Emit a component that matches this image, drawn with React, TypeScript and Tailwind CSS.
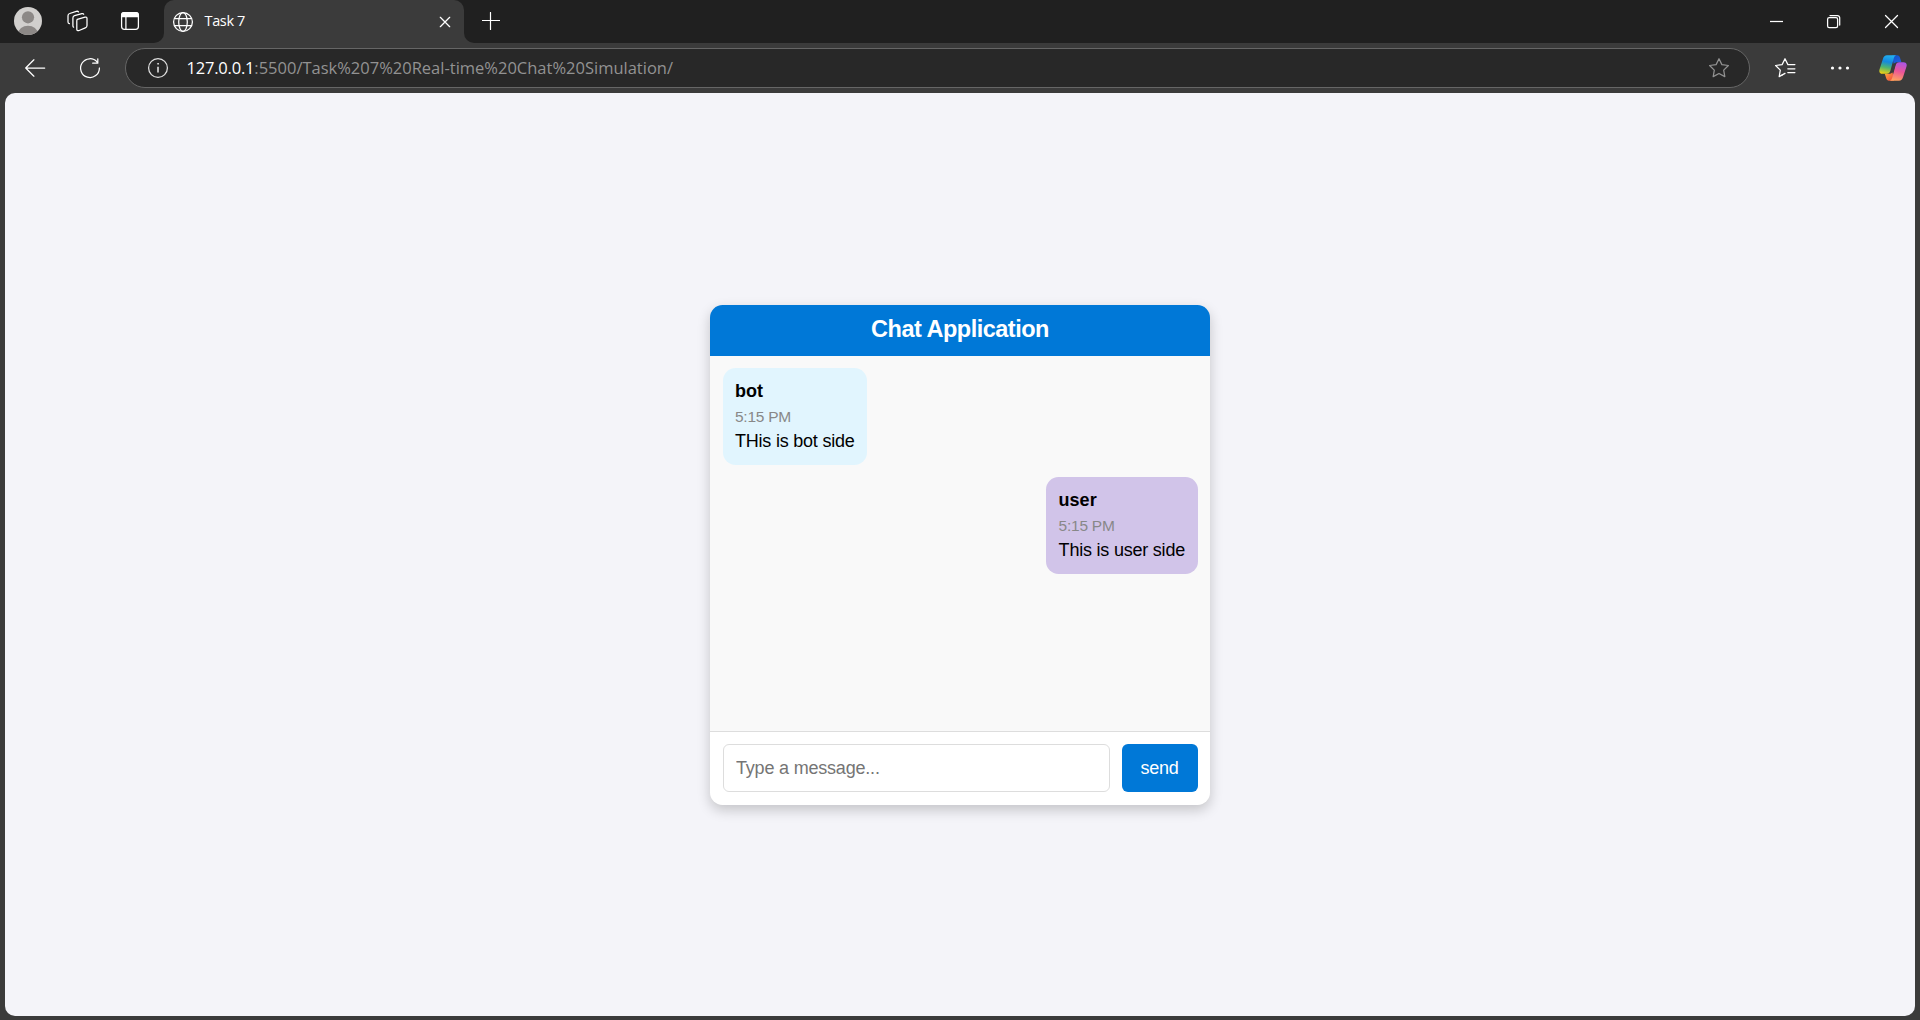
import type { ReactNode } from 'react';

function Icon({ size = 24, className = '', children }: { size?: number; className?: string; children: ReactNode }) {
  return (
    <svg
      width={size}
      height={size}
      viewBox={`0 0 ${size} ${size}`}
      fill="none"
      stroke="currentColor"
      strokeWidth="1.25"
      strokeLinecap="round"
      strokeLinejoin="round"
      className={`block shrink-0 ${className}`}
    >
      {children}
    </svg>
  );
}

function Avatar() {
  return (
    <svg width="28" height="28" viewBox="0 0 28 28" className="block shrink-0">
      <defs>
        <clipPath id="avatar-clip">
          <circle cx="14" cy="14" r="14" />
        </clipPath>
      </defs>
      <g clipPath="url(#avatar-clip)">
        <rect width="28" height="28" fill="#d1cfcd" />
        <circle cx="14" cy="10.3" r="6.1" fill="#8c8886" />
        <ellipse cx="14" cy="26.5" rx="9.8" ry="7.8" fill="#8c8886" />
      </g>
    </svg>
  );
}

function CopilotLogo() {
  return (
    <svg width="28" height="26" viewBox="0 0 28 26" className="block shrink-0">
      <defs>
        <linearGradient id="cp-left" x1="9" y1="0" x2="5" y2="19" gradientUnits="userSpaceOnUse">
          <stop offset="0" stopColor="#22b0ee" />
          <stop offset="0.35" stopColor="#1488e0" />
          <stop offset="0.65" stopColor="#4fb56f" />
          <stop offset="1" stopColor="#f6d010" />
        </linearGradient>
        <linearGradient id="cp-right" x1="23" y1="7" x2="18" y2="26" gradientUnits="userSpaceOnUse">
          <stop offset="0" stopColor="#a855e8" />
          <stop offset="0.5" stopColor="#ec5598" />
          <stop offset="1" stopColor="#ffa35e" />
        </linearGradient>
        <linearGradient id="cp-top" x1="14" y1="0" x2="20" y2="8" gradientUnits="userSpaceOnUse">
          <stop offset="0" stopColor="#1250c4" />
          <stop offset="1" stopColor="#2060e0" />
        </linearGradient>
        <linearGradient id="cp-bottom" x1="7" y1="19" x2="13" y2="25" gradientUnits="userSpaceOnUse">
          <stop offset="0" stopColor="#ff9a3c" />
          <stop offset="1" stopColor="#f0523f" />
        </linearGradient>
      </defs>
      <path d="M13 .3h5.200c1.500 0 2.300 1 2.800 2.500l1.400 4.400h-3.500c-2-.1-3.300.4-4.200 1.800z" fill="url(#cp-top)" />
      <path d="M15 25.700H10c-1.500 0-2.300-1-2.800-2.500L5.800 18.800h3.500c2 .1 3.300-.4 4.200-1.800z" fill="url(#cp-bottom)" />
      <path d="M8 .3h9.200c-1.300.4-1.900 1.500-2.400 3L11.400 15.800c-.6 2-1.800 3-3.700 3H3.500c-2.600 0-3.700-1.700-3-4.300L3.900 4C4.600 1.600 5.900.3 8 .3z" fill="url(#cp-left)" />
      <path d="M20 25.700h-9.200c1.300-.4 1.900-1.500 2.400-3l3.400-12.500c.6-2 1.800-3 3.700-3h4.200c2.600 0 3.700 1.700 3 4.300L24.100 22c-.7 2.400-2 3.700-4.100 3.700z" fill="url(#cp-right)" />
      <path d="M14.300 8.700h2.500l-2.700 8.700h-2.600z" fill="#3b3b3b" />
    </svg>
  );
}

function TabStrip() {
  return (
    <div className="flex h-[43px] shrink-0 bg-[#3b3b3b] text-white">
      <div className="flex w-[164px] items-start rounded-br-[10px] bg-[#202020] pl-3.5 pt-[7px]">
        <Avatar />
        <Icon className="ml-6 mt-0.5">
          <path d="M11.300 10.300l7.700-2.200c1.200-.3 2 .2 2 1.400v7c0 1.200-.6 2-1.700 2.400l-6.200 2.600c-1.300.5-2.300 0-2.300-1.300v-8c0-1 .2-1.600.5-1.900z" />
          <path d="M7.600 18.200c-.5-.3-.7-.8-.7-1.500V9c0-1.200.6-2 1.700-2.300l7.300-2c.8-.2 1.500 0 1.800.6" />
          <path d="M3.400 14.600c-.9-.2-1.400-.7-1.400-1.600V6.700c0-1.100.6-1.900 1.700-2.200l6.600-2.100c1-.3 1.800-.1 2.200.5" />
        </Icon>
        <Icon className="ml-7 mt-0.5">
          <rect x="3.600" y="3.600" width="16.800" height="16.800" rx="2.800" />
          <path d="M3.600 7.700h16.800V6.400a2.800 2.800 0 0 0-2.800-2.800H6.400a2.800 2.800 0 0 0-2.800 2.800z" fill="currentColor" />
          <path d="M7.900 8v12.400" />
        </Icon>
      </div>
      <div className="w-[300px] bg-[#202020]">
        <div className="flex h-full items-start rounded-t-[10px] bg-[#3b3b3b] pl-[7px] pt-[10px]">
          <Icon>
            <circle cx="12" cy="12" r="9.400" />
            <ellipse cx="12" cy="12" rx="4.300" ry="9.400" />
            <path d="M3.500 8.500h17M3.500 15.500h17" />
          </Icon>
          <span className="ml-[9.500px] flex-1 font-['Open_Sans',sans-serif] text-[14.500px] leading-[22px] tracking-[-0.35px]">Task 7</span>
          <Icon size={12} className="mr-[13px] mt-[6px]">
            <path d="M1.300 1.300l9.400 9.400M10.700 1.300L1.300 10.700" />
          </Icon>
        </div>
      </div>
      <div className="flex flex-1 items-start rounded-bl-[10px] bg-[#202020] pl-[18px] pr-[21px] pt-3">
        <Icon size={18}>
          <path d="M8.500 .5v17M0.500 8.500h17" strokeWidth="1.200" />
        </Icon>
        <div className="ml-auto flex gap-[43px] pt-[2px]">
          <Icon size={15}>
            <path d="M2 7.500h13" strokeLinecap="butt" />
          </Icon>
          <Icon size={15}>
            <rect x="1.600" y="3.600" width="10" height="10" rx="1.600" />
            <path d="M4 1.500h7.500a2.200 2.200 0 0 1 2.200 2.200v7.300" />
          </Icon>
          <Icon size={15}>
            <path d="M1.500 1.500l12 12M13.500 1.500l-12 12" />
          </Icon>
        </div>
      </div>
    </div>
  );
}

function Toolbar() {
  return (
    <div className="flex h-[50px] shrink-0 items-center bg-[#3b3b3b] pl-[23px] pr-[13px] text-white">
      <Icon>
        <path d="M10.900 3.800L2.700 12l8.200 8.200M3 12h18.700" />
      </Icon>
      <Icon className="ml-[31px]">
        <path d="M19.200 6.100A9.400 9.400 0 1 0 21.400 12M19.800 2.800v4.400h-5.100" />
      </Icon>
      <div className="ml-[23px] flex h-10 w-[1625px] items-center rounded-full border border-[#666666] bg-[#282828] pl-5 pr-[18px]">
        <Icon className="text-[#e0e0e0]">
          <circle cx="12" cy="12" r="9.400" />
          <path d="M12 10.800v5.800" strokeWidth="1.600" strokeLinecap="butt" />
          <circle cx="12" cy="7.800" r="0.500" fill="currentColor" strokeWidth="0.800" />
        </Icon>
        <span className="ml-[16.500px] font-['Open_Sans',sans-serif] text-[16.500px] leading-6 text-[#929292]">
          <span className="tracking-[-0.2px] text-white">127.0.0.1</span>:5500/Task%207%20Real-time%20Chat%20Simulation/
        </span>
        <Icon className="ml-auto text-[#929292]">
          <path d="M12 2.700l2.900 5.900 6.500.9-4.700 4.600 1.100 6.500-5.800-3.100-5.800 3.100 1.100-6.500-4.700-4.600 6.500-.9z" />
        </Icon>
      </div>
      <Icon className="ml-[23px]">
        <path d="M9.300 18.900L6.200 20.600l1.100-6.500-4.700-4.600 6.500-.9L12 2.700l2.900 5.900h7" />
        <path d="M14.800 12.800h7.100M14.800 16.500h7.100M9.300 18.900l2.700-1.500" />
      </Icon>
      <Icon className="ml-[31px]">
        <g fill="currentColor" stroke="none">
          <circle cx="4.500" cy="12" r="1.600" />
          <circle cx="12" cy="12" r="1.600" />
          <circle cx="19.500" cy="12" r="1.600" />
        </g>
      </Icon>
      <div className="ml-auto">
        <CopilotLogo />
      </div>
    </div>
  );
}

function Message({ author, time, text, own = false }: { author: string; time: string; text: string; own?: boolean }) {
  return (
    <div
      className={`h-[97px] rounded-[12.500px] px-[12.500px] pt-[13.500px] ${
        own ? 'self-end bg-[#d1c4e9]' : 'self-start bg-[#e1f5fe]'
      }`}
    >
      <div className="text-[18px] leading-[21px] font-bold">{author}</div>
      <div className="mt-[5px] text-[15.500px] leading-[20px] tracking-[-0.250px] text-[#888888]">{time}</div>
      <div className="mt-[4px] text-[18px] leading-[21px] tracking-[-0.215px]">{text}</div>
    </div>
  );
}

function Chat() {
  return (
    <div className="flex h-[500px] w-[500px] flex-col overflow-hidden rounded-[12.500px] bg-white font-['Liberation_Sans',Arial,sans-serif] text-black shadow-[0_5px_12.500px_rgba(0,0,0,0.2)]">
      <div className="h-[51px] shrink-0 bg-[#0078d7] pt-[10px] text-center text-[23.500px] leading-[28px] font-bold tracking-[-0.5px] text-white">
        Chat Application
      </div>
      <div className="flex flex-1 flex-col gap-3 bg-[#f9f9f9] px-[12.500px] pt-3">
        <Message author="bot" time="5:15 PM" text="THis is bot side" />
        <Message author="user" time="5:15 PM" text="This is user side" own />
      </div>
      <div className="flex h-[74px] shrink-0 gap-3 border-t border-[#dddddd] px-[12.500px] pt-3">
        <input
          type="text"
          placeholder="Type a message..."
          className="h-12 min-w-0 flex-1 rounded-[6px] border border-[#dddddd] bg-white px-[12.500px] pt-0.5 text-[18px] tracking-[-0.200px] outline-none placeholder:text-[#757575]"
        />
        <button type="button" className="h-12 w-[76px] rounded-[6px] bg-[#0078d7] pt-0.5 text-[18px] tracking-[-0.300px] text-white">
          send
        </button>
      </div>
    </div>
  );
}

export default function App() {
  return (
    <div className="flex h-[1020px] w-[1920px] flex-col overflow-hidden bg-[#3b3b3b]">
      <TabStrip />
      <Toolbar />
      <main className="mx-[5px] mb-1 flex flex-1 items-center justify-center rounded-[10px] bg-[#f4f4f9]">
        <Chat />
      </main>
    </div>
  );
}
